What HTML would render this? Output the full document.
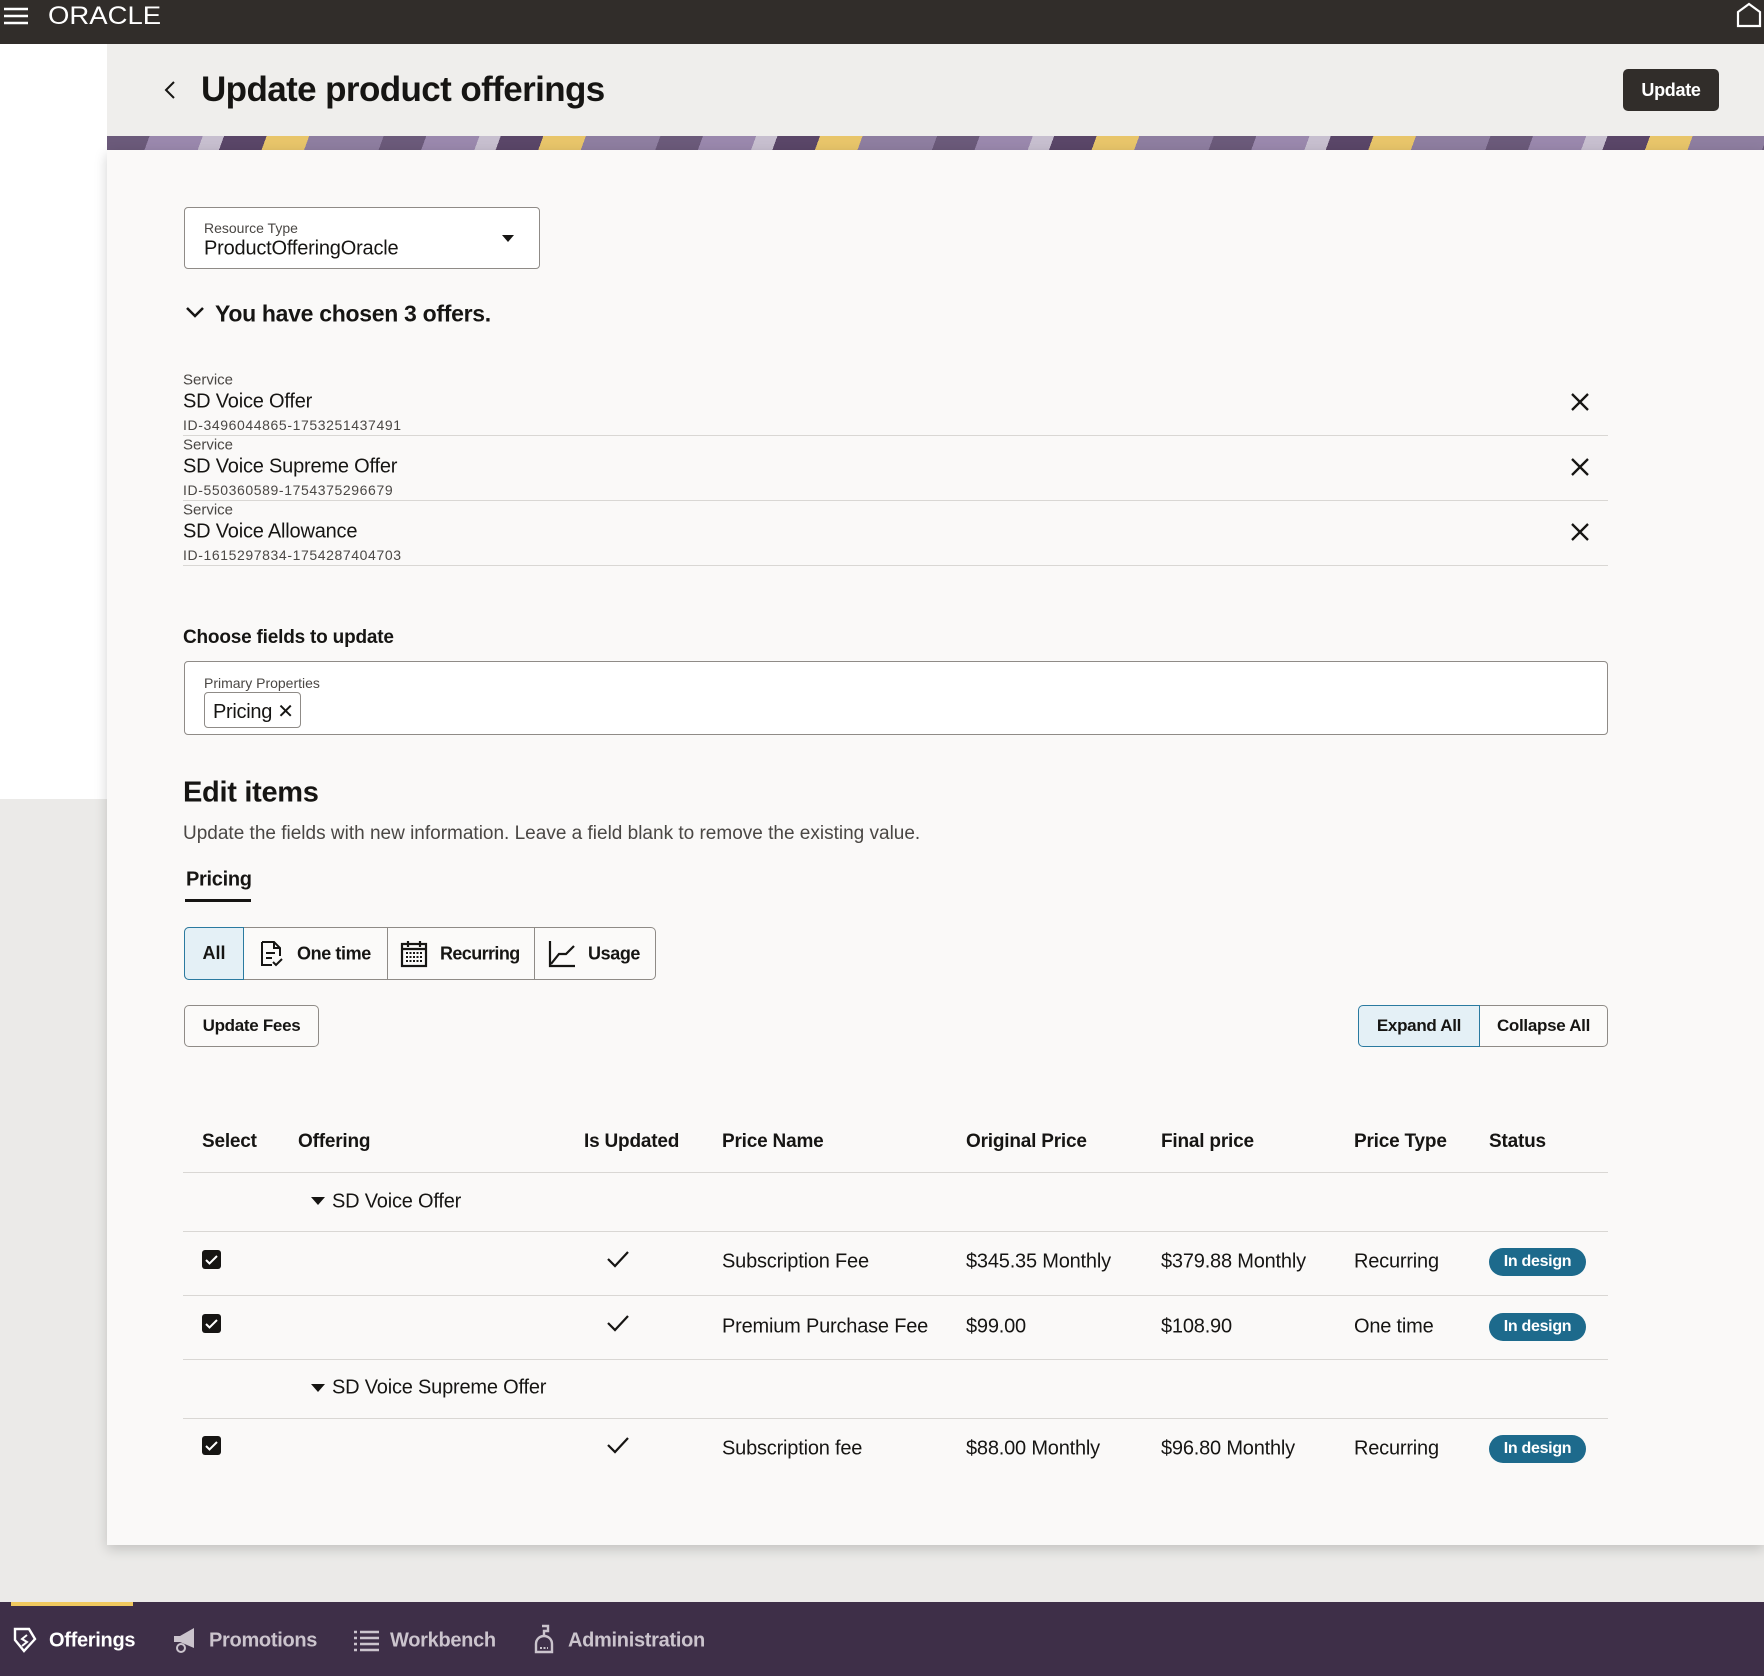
<!DOCTYPE html>
<html><head><meta charset="utf-8"><style>
*{margin:0;padding:0;box-sizing:border-box}
body{width:1764px;height:1676px;position:relative;overflow:hidden;background:#ebeae8;font-family:"Liberation Sans",sans-serif;color:#161513}
.a{position:absolute;white-space:nowrap}
.t{transform:translateY(-50%)}
.line{position:absolute;height:1px;background:#d9d7d4}
.btn{position:absolute;border:1px solid #8f8b87;border-radius:5px;background:#fbfaf9;font-size:17px;font-weight:600;letter-spacing:-.3px;display:flex;align-items:center;justify-content:center}
.hd{font-size:19px;font-weight:600;letter-spacing:-.2px}
.cell{font-size:20px;letter-spacing:-.2px}
.cb{position:absolute;width:19px;height:19px;background:#161513;border-radius:3px}
.badge{position:absolute;width:97px;height:28px;border-radius:14px;background:#1d6a8c;color:#fff;font-size:16px;font-weight:600;letter-spacing:-.3px;display:flex;align-items:center;justify-content:center}
.nav{font-size:20px;font-weight:600;color:#cbc4cd;letter-spacing:-.3px}
</style></head><body>
<div class="a" style="left:0;top:0;width:1764px;height:44px;background:#312d2a"></div>
<svg class="a" style="left:4px;top:6px" width="24" height="20"><path d="M0 3h24M0 10h24M0 17h24" stroke="#fff" stroke-width="2.4"/></svg>
<div class="a" style="left:48px;top:2px;color:#fff;font-size:25px;letter-spacing:0px;transform:scaleX(1.1);transform-origin:left">ORACLE</div>
<svg class="a" style="left:1735px;top:2px" width="29" height="26"><path d="M3 24V10L14 2l11 8v14z" fill="none" stroke="#fff" stroke-width="2.2"/></svg>
<div class="a" style="left:0;top:44px;width:107px;height:755px;background:#fff"></div>
<div class="a" style="left:107px;top:44px;width:1657px;height:92px;background:#efeeec"></div>
<svg class="a" style="left:163px;top:80px" width="14" height="20"><path d="M11 2L3 10l8 8" fill="none" stroke="#161513" stroke-width="2"/></svg>
<div class="a t" style="left:201px;top:90px;font-size:35px;font-weight:700;letter-spacing:-.6px">Update product offerings</div>
<div class="a" style="left:1623px;top:69px;width:96px;height:42px;background:#312d2a;border-radius:5px;color:#fff;font-size:18px;font-weight:600;letter-spacing:-.3px;display:flex;align-items:center;justify-content:center">Update</div>
<div class="a" style="left:107px;top:136px;width:1657px;height:14px;background:repeating-linear-gradient(110deg,#6b5a7a 0 40px,#9a88ad 40px 90px,#c7bfcf 90px 110px,#5a4668 110px 150px,#e8c56a 150px 190px,#8e7ea0 190px 260px)"></div>
<div class="a" style="left:107px;top:150px;width:1657px;height:1395px;background:#faf9f8;box-shadow:0 4px 12px rgba(0,0,0,.18)"></div>

<div class="a" style="left:184px;top:207px;width:356px;height:62px;border:1px solid #8f8b87;border-radius:4px;background:#fff"></div>
<div class="a t" style="left:204px;top:228px;font-size:14px;color:#4a4744">Resource Type</div>
<div class="a t" style="left:204px;top:249px;font-size:20px;letter-spacing:-.2px">ProductOfferingOracle</div>
<svg class="a" style="left:501px;top:234px" width="14" height="9"><path d="M1 1h12L7 8z" fill="#161513"/></svg>

<svg class="a" style="left:185px;top:306px" width="20" height="14"><path d="M2 2l8 8 8-8" fill="none" stroke="#161513" stroke-width="2.5"/></svg>
<div class="a t" style="left:215px;top:314px;font-size:23px;font-weight:600;letter-spacing:-.3px">You have chosen 3 offers.</div>

<div class="a t" style="left:183px;top:380px;font-size:15px;color:#4a4744">Service</div>
<div class="a t" style="left:183px;top:402px;font-size:20px;letter-spacing:-.2px">SD Voice Offer</div>
<div class="a t" style="left:183px;top:425px;font-size:14px;color:#4a4744;letter-spacing:.6px">ID-3496044865-1753251437491</div>
<div class="line" style="left:183px;top:435px;width:1425px"></div>
<div class="a t" style="left:183px;top:445px;font-size:15px;color:#4a4744">Service</div>
<div class="a t" style="left:183px;top:467px;font-size:20px;letter-spacing:-.2px">SD Voice Supreme Offer</div>
<div class="a t" style="left:183px;top:490px;font-size:14px;color:#4a4744;letter-spacing:.6px">ID-550360589-1754375296679</div>
<div class="line" style="left:183px;top:500px;width:1425px"></div>
<div class="a t" style="left:183px;top:510px;font-size:15px;color:#4a4744">Service</div>
<div class="a t" style="left:183px;top:532px;font-size:20px;letter-spacing:-.2px">SD Voice Allowance</div>
<div class="a t" style="left:183px;top:555px;font-size:14px;color:#4a4744;letter-spacing:.6px">ID-1615297834-1754287404703</div>
<div class="line" style="left:183px;top:565px;width:1425px"></div>
<svg class="a" style="left:1570px;top:392px" width="20" height="20"><path d="M2 2l16 16M18 2L2 18" stroke="#161513" stroke-width="2.3"/></svg>
<svg class="a" style="left:1570px;top:457px" width="20" height="20"><path d="M2 2l16 16M18 2L2 18" stroke="#161513" stroke-width="2.3"/></svg>
<svg class="a" style="left:1570px;top:522px" width="20" height="20"><path d="M2 2l16 16M18 2L2 18" stroke="#161513" stroke-width="2.3"/></svg>

<div class="a t" style="left:183px;top:638px;font-size:19px;font-weight:700;letter-spacing:-.2px">Choose fields to update</div>
<div class="a" style="left:184px;top:661px;width:1424px;height:74px;border:1px solid #8f8b87;border-radius:4px;background:#fff"></div>
<div class="a t" style="left:204px;top:683px;font-size:14px;color:#4a4744">Primary Properties</div>
<div class="a" style="left:204px;top:692px;width:97px;height:36px;border:1px solid #8f8b87;border-radius:4px;font-size:20px;letter-spacing:-.3px;padding:6px 0 0 8px">Pricing ✕</div>

<div class="a t" style="left:183px;top:793px;font-size:29px;font-weight:700;letter-spacing:-.3px">Edit items</div>
<div class="a t" style="left:183px;top:834px;font-size:19px;color:#4a4744">Update the fields with new information. Leave a field blank to remove the existing value.</div>
<div class="a t" style="left:186px;top:880px;font-size:20px;font-weight:600;letter-spacing:-.3px">Pricing</div>
<div class="a" style="left:185px;top:899px;width:66px;height:3px;background:#161513"></div>

<div class="a" style="left:184px;top:927px;width:472px;height:53px;border:1px solid #8f8b87;border-radius:5px;background:#fbfaf9"></div>
<div class="a" style="left:184px;top:927px;width:60px;height:53px;border:1px solid #2a7aa0;border-radius:5px 0 0 5px;background:#e4f0f6;font-size:18px;font-weight:600;display:flex;align-items:center;justify-content:center">All</div>
<div class="a" style="left:387px;top:927px;width:1px;height:53px;background:#8f8b87"></div>
<div class="a" style="left:534px;top:927px;width:1px;height:53px;background:#8f8b87"></div>
<svg class="a" style="left:259px;top:940px" width="26" height="28"><path d="M3 2h12l6 6v8M3 2v23h10M15 2v6h6M7 13h9M7 18h6M14 22l3 3 6-6" fill="none" stroke="#161513" stroke-width="2"/></svg>
<div class="a t" style="left:297px;top:954px;font-size:18px;font-weight:600;letter-spacing:-.4px">One time</div>
<svg class="a" style="left:400px;top:940px" width="28" height="28"><rect x="2" y="4" width="24" height="22" fill="none" stroke="#161513" stroke-width="2.2"/><path d="M8 1v6M20 1v6M2 9h24" stroke="#161513" stroke-width="2.2"/><path d="M6 13h16M6 17h16M6 21h16" stroke="#161513" stroke-width="2" stroke-dasharray="2 1.5"/></svg>
<div class="a t" style="left:440px;top:954px;font-size:18px;font-weight:600;letter-spacing:-.6px">Recurring</div>
<svg class="a" style="left:548px;top:940px" width="28" height="28"><path d="M2 1v25h25M3 24l8-10h7l8-8" fill="none" stroke="#161513" stroke-width="2.2"/></svg>
<div class="a t" style="left:588px;top:954px;font-size:18px;font-weight:600;letter-spacing:-.4px">Usage</div>

<div class="btn" style="left:184px;top:1005px;width:135px;height:42px">Update Fees</div>
<div class="btn" style="left:1479px;top:1005px;width:129px;height:42px;border-radius:0 5px 5px 0">Collapse All</div>
<div class="btn" style="left:1358px;top:1005px;width:122px;height:42px;border-radius:5px 0 0 5px;border-color:#2a7aa0;background:#e4f0f6">Expand All</div>

<div class="a t hd" style="left:202px;top:1142px">Select</div>
<div class="a t hd" style="left:298px;top:1142px">Offering</div>
<div class="a t hd" style="left:584px;top:1142px">Is Updated</div>
<div class="a t hd" style="left:722px;top:1142px">Price Name</div>
<div class="a t hd" style="left:966px;top:1142px">Original Price</div>
<div class="a t hd" style="left:1161px;top:1142px">Final price</div>
<div class="a t hd" style="left:1354px;top:1142px">Price Type</div>
<div class="a t hd" style="left:1489px;top:1142px">Status</div>
<div class="line" style="left:183px;top:1172px;width:1425px"></div>

<svg class="a" style="left:310px;top:1196px" width="16" height="10"><path d="M1 1h14L8 9z" fill="#161513"/></svg>
<div class="a t cell" style="left:332px;top:1202px">SD Voice Offer</div>
<div class="line" style="left:183px;top:1231px;width:1425px"></div>

<svg class="a" style="left:202px;top:1250px" width="19" height="19"><rect width="19" height="19" rx="3" fill="#161513"/><path d="M4 10l3.5 3.5L15 6" fill="none" stroke="#fff" stroke-width="2"/></svg>
<svg class="a" style="left:606px;top:1250px" width="24" height="18"><path d="M2 9l7 7L22 2" fill="none" stroke="#161513" stroke-width="2.2"/></svg>
<div class="a t cell" style="left:722px;top:1262px">Subscription Fee</div>
<div class="a t cell" style="left:966px;top:1262px">$345.35 Monthly</div>
<div class="a t cell" style="left:1161px;top:1262px">$379.88 Monthly</div>
<div class="a t cell" style="left:1354px;top:1262px">Recurring</div>
<div class="badge" style="left:1489px;top:1248px">In design</div>
<div class="line" style="left:183px;top:1295px;width:1425px"></div>

<svg class="a" style="left:202px;top:1314px" width="19" height="19"><rect width="19" height="19" rx="3" fill="#161513"/><path d="M4 10l3.5 3.5L15 6" fill="none" stroke="#fff" stroke-width="2"/></svg>
<svg class="a" style="left:606px;top:1314px" width="24" height="18"><path d="M2 9l7 7L22 2" fill="none" stroke="#161513" stroke-width="2.2"/></svg>
<div class="a t cell" style="left:722px;top:1327px">Premium Purchase Fee</div>
<div class="a t cell" style="left:966px;top:1327px">$99.00</div>
<div class="a t cell" style="left:1161px;top:1327px">$108.90</div>
<div class="a t cell" style="left:1354px;top:1327px">One time</div>
<div class="badge" style="left:1489px;top:1313px">In design</div>
<div class="line" style="left:183px;top:1359px;width:1425px"></div>

<svg class="a" style="left:310px;top:1383px" width="16" height="10"><path d="M1 1h14L8 9z" fill="#161513"/></svg>
<div class="a t cell" style="left:332px;top:1388px">SD Voice Supreme Offer</div>
<div class="line" style="left:183px;top:1418px;width:1425px"></div>

<svg class="a" style="left:202px;top:1436px" width="19" height="19"><rect width="19" height="19" rx="3" fill="#161513"/><path d="M4 10l3.5 3.5L15 6" fill="none" stroke="#fff" stroke-width="2"/></svg>
<svg class="a" style="left:606px;top:1436px" width="24" height="18"><path d="M2 9l7 7L22 2" fill="none" stroke="#161513" stroke-width="2.2"/></svg>
<div class="a t cell" style="left:722px;top:1449px">Subscription fee</div>
<div class="a t cell" style="left:966px;top:1449px">$88.00 Monthly</div>
<div class="a t cell" style="left:1161px;top:1449px">$96.80 Monthly</div>
<div class="a t cell" style="left:1354px;top:1449px">Recurring</div>
<div class="badge" style="left:1489px;top:1435px">In design</div>

<div class="a" style="left:0;top:1602px;width:1764px;height:74px;background:#3e2f48"></div>
<div class="a" style="left:11px;top:1602px;width:122px;height:4px;background:#f0c95f"></div>
<svg class="a" style="left:12px;top:1626px" width="26" height="28"><path d="M3 3h14l6 10-11 12L3 14z" fill="none" stroke="#fff" stroke-width="2.4"/><path d="M15 9l-5 4 5 3-5 4" fill="none" stroke="#fff" stroke-width="2"/></svg>
<div class="a t nav" style="left:49px;top:1641px;color:#fff">Offerings</div>
<svg class="a" style="left:172px;top:1627px" width="26" height="27"><path d="M2 9h6l14-8v20L8 15H2z" fill="#cbc4cd"/><circle cx="9" cy="21" r="4" fill="none" stroke="#cbc4cd" stroke-width="2"/></svg>
<div class="a t nav" style="left:209px;top:1641px">Promotions</div>
<svg class="a" style="left:354px;top:1630px" width="25" height="22"><path d="M0 2h3M6 2h19M0 8h3M6 8h19M0 14h3M6 14h19M0 20h3M6 20h19" stroke="#cbc4cd" stroke-width="2.5"/></svg>
<div class="a t nav" style="left:390px;top:1641px">Workbench</div>
<svg class="a" style="left:532px;top:1624px" width="24" height="30"><path d="M10 2h6v5h-4v6M4 28V20c0-5 4-8 8-8s8 3 8 8v8z" fill="none" stroke="#cbc4cd" stroke-width="2.4"/><path d="M8 24h8" stroke="#cbc4cd" stroke-width="2" stroke-dasharray="2 1.5"/></svg>
<div class="a t nav" style="left:568px;top:1641px">Administration</div>
</body></html>
